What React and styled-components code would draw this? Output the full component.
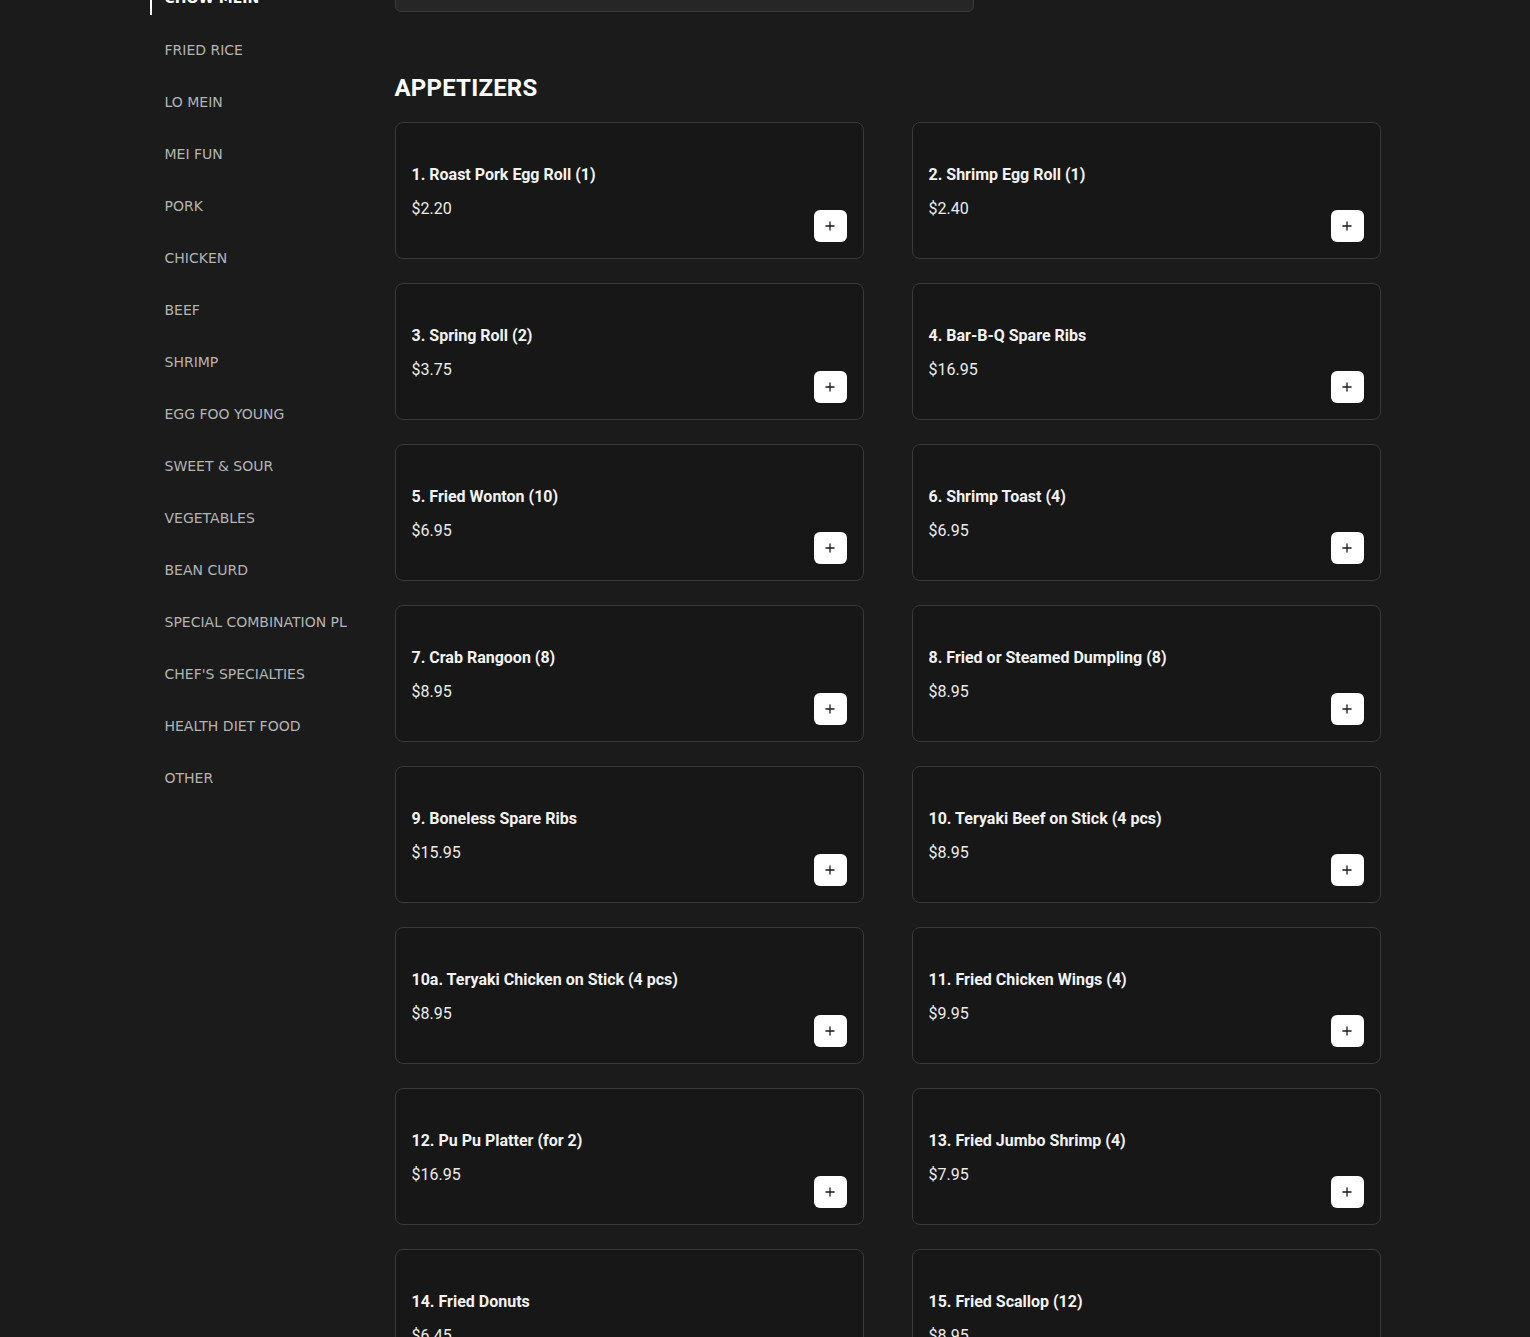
import React from 'react';
import styled, { createGlobalStyle } from 'styled-components';
import { Plus } from 'lucide-react';

const GlobalStyle = createGlobalStyle`
  html, body {
    margin: 0;
    padding: 0;
    background: #1b1b1b;
    overflow: hidden;
  }
  * { box-sizing: border-box; }
`;

const categories = [
  'CHOW MEIN', 'FRIED RICE', 'LO MEIN', 'MEI FUN', 'PORK', 'CHICKEN', 'BEEF',
  'SHRIMP', 'EGG FOO YOUNG', 'SWEET & SOUR', 'VEGETABLES', 'BEAN CURD',
  'SPECIAL COMBINATION PLATES', "CHEF'S SPECIALTIES", 'HEALTH DIET FOOD', 'OTHER',
];

const items = [
  ['1. Roast Pork Egg Roll (1)', '$2.20'],
  ['2. Shrimp Egg Roll (1)', '$2.40'],
  ['3. Spring Roll (2)', '$3.75'],
  ['4. Bar-B-Q Spare Ribs', '$16.95'],
  ['5. Fried Wonton (10)', '$6.95'],
  ['6. Shrimp Toast (4)', '$6.95'],
  ['7. Crab Rangoon (8)', '$8.95'],
  ['8. Fried or Steamed Dumpling (8)', '$8.95'],
  ['9. Boneless Spare Ribs', '$15.95'],
  ['10. Teryaki Beef on Stick (4 pcs)', '$8.95'],
  ['10a. Teryaki Chicken on Stick (4 pcs)', '$8.95'],
  ['11. Fried Chicken Wings (4)', '$9.95'],
  ['12. Pu Pu Platter (for 2)', '$16.95'],
  ['13. Fried Jumbo Shrimp (4)', '$7.95'],
  ['14. Fried Donuts', '$6.45'],
  ['15. Fried Scallop (12)', '$8.95'],
];

// page is shown scrolled down a bit, so the layout starts above the fold
const Layout = styled.div`
  width: 1231px;
  margin: -48px auto 0;
  display: flex;
  gap: 48px;
`;

const Sidebar = styled.nav`
  width: 197px;
  flex-shrink: 0;
  padding-top: 29px;
  display: flex;
  flex-direction: column;
  gap: 18px;
`;

const NavItem = styled.div`
  height: 34px;
  display: flex;
  align-items: center;
  padding-left: ${p => (p.$active ? '13px' : '15px')};
  border-left: ${p => (p.$active ? '2px solid #fff' : 'none')};
  font-family: 'DejaVu Sans', sans-serif;
  font-size: 14px;
  font-weight: ${p => (p.$active ? 700 : 400)};
  color: ${p => (p.$active ? '#fff' : '#b4b4b4')};
  white-space: nowrap;
  overflow: hidden;
`;

const Main = styled.main`
  width: 986px;
  display: flex;
  flex-direction: column;
`;

const SearchBox = styled.div`
  width: 579px;
  height: 60px;
  background: #262626;
  border: 1px solid #3a3a3a;
  border-radius: 6px;
`;

const SectionTitle = styled.h2`
  margin: 62px 0 20px;
  font-family: Roboto, 'Liberation Sans', sans-serif;
  font-size: 24px;
  line-height: 28px;
  font-weight: 700;
  color: #fff;
  letter-spacing: 0.2px;
`;

const Grid = styled.div`
  display: grid;
  grid-template-columns: repeat(2, 469px);
  column-gap: 48px;
  row-gap: 24px;
`;

const Card = styled.div`
  height: 137px;
  background: #171717;
  border: 1px solid #393939;
  border-radius: 8px;
  padding: 16px;
  display: flex;
  justify-content: space-between;
  align-items: center;
`;

const Info = styled.div`
  margin-top: 2px;
  display: flex;
  flex-direction: column;
  gap: 15px;
  font-family: Roboto, 'Liberation Sans', sans-serif;
  font-size: 16px;
  line-height: 19px;
`;

const Name = styled.div`
  font-weight: 700;
  color: #f2f2f2;
`;

const Price = styled.div`
  font-weight: 400;
  color: #ececec;
`;

const AddButton = styled.button`
  align-self: flex-end;
  width: 33px;
  height: 32px;
  padding: 0;
  border: none;
  border-radius: 6px;
  background: #fff;
  color: #1a1a1a;
  display: flex;
  align-items: center;
  justify-content: center;
  cursor: pointer;
`;

export default function App() {
  return (
    <>
      <GlobalStyle />
      <Layout>
        <Sidebar>
          {categories.map((c, i) => (
            <NavItem key={c} $active={i === 0}>{c}</NavItem>
          ))}
        </Sidebar>
        <Main>
          <SearchBox />
          <SectionTitle>APPETIZERS</SectionTitle>
          <Grid>
            {items.map(([name, price]) => (
              <Card key={name}>
                <Info>
                  <Name>{name}</Name>
                  <Price>{price}</Price>
                </Info>
                <AddButton aria-label="add">
                  <Plus size={14} strokeWidth={2.2} />
                </AddButton>
              </Card>
            ))}
          </Grid>
        </Main>
      </Layout>
    </>
  );
}
